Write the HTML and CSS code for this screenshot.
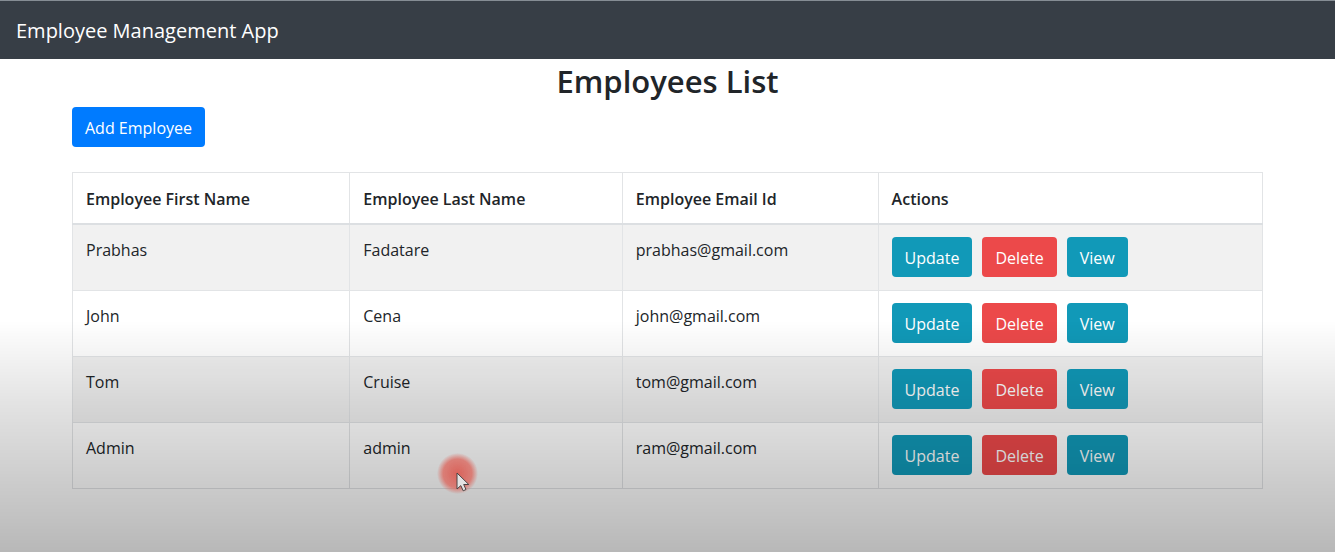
FILE: index.html
```
<!DOCTYPE html>
<html lang="en">
<head>
<meta charset="utf-8">
<title>Employee Management App</title>
<link rel="stylesheet" href="styles.css">
</head>
<body>
<header class="navbar"><a class="brand" href="#">Employee Management App</a></header>
<main class="container">
  <h2 class="title">Employees List</h2>
  <button class="btn btn-primary" type="button">Add Employee</button>
  <table class="table">
    <colgroup><col class="col-first"><col class="col-last"><col class="col-email"><col></colgroup>
    <thead>
      <tr><th scope="col">Employee First Name</th><th scope="col">Employee Last Name</th><th scope="col">Employee Email Id</th><th scope="col">Actions</th></tr>
    </thead>
    <tbody>
      <tr><td>Prabhas</td><td>Fadatare</td><td>prabhas@gmail.com</td><td><div class="actions"><button class="btn btn-info" type="button">Update</button><button class="btn btn-danger" type="button">Delete</button><button class="btn btn-info" type="button">View</button></div></td></tr>
      <tr><td>John</td><td>Cena</td><td>john@gmail.com</td><td><div class="actions"><button class="btn btn-info" type="button">Update</button><button class="btn btn-danger" type="button">Delete</button><button class="btn btn-info" type="button">View</button></div></td></tr>
      <tr><td>Tom</td><td>Cruise</td><td>tom@gmail.com</td><td><div class="actions"><button class="btn btn-info" type="button">Update</button><button class="btn btn-danger" type="button">Delete</button><button class="btn btn-info" type="button">View</button></div></td></tr>
      <tr><td>Admin</td><td>admin</td><td>ram@gmail.com</td><td><div class="actions"><button class="btn btn-info" type="button">Update</button><button class="btn btn-danger" type="button">Delete</button><button class="btn btn-info" type="button">View</button></div></td></tr>
    </tbody>
  </table>
</main>
<div class="shade"></div>
<div class="pointer">
  <svg class="cursor" viewBox="0 0 14 20" aria-hidden="true"><path d="M1 1v16l3.8-3.4 2.4 5.2 2.8-1.3-2.3-5h5.1z" fill="#e4e4e4" stroke="#4a4444" stroke-width="1"/></svg>
</div>
</body>
</html>
```

FILE: styles.css
```
* {
  box-sizing: border-box;
}

body {
  margin: 0;
  min-height: 100vh;
  background: #fff;
  color: #212529;
  font-family: "Segoe UI", "Open Sans", "Noto Sans", sans-serif;
  font-size: 16px;
  line-height: 26px;
}

.navbar {
  display: flex;
  align-items: center;
  padding: 15px 16px 13px;
  border-top: 1px solid #858d94;
  background: #373e46;
}

.brand {
  color: #fff;
  font-size: 20px;
  line-height: 30px;
  text-decoration: none;
}

.container {
  max-width: 1191px;
  margin: 0 auto;
}

.title {
  margin: 0 0 4px;
  font-size: 31px;
  font-weight: 600;
  line-height: 44px;
  text-align: center;
}

.btn {
  display: block;
  padding: 8px 13px 6px;
  border: 0;
  border-radius: 4px;
  color: #fff;
  font: inherit;
}

.btn-primary {
  background: #007bff;
}

.btn-info {
  background: #1199b8;
}

.btn-danger {
  background: #ec494a;
}

.table {
  width: 100%;
  margin-top: 25px;
  border-collapse: collapse;
  table-layout: fixed;
}

.col-first {
  width: 23.3%;
}

.col-last {
  width: 22.9%;
}

.col-email {
  width: 21.5%;
}

.table th,
.table td {
  padding: 12px 13px 13px;
  border: 1px solid #e2e4e6;
  text-align: left;
  vertical-align: top;
}

.table th {
  padding: 13px 13px 11px;
  border-bottom: 2px solid #dcdfe2;
  font-weight: 600;
}

.table tbody tr:nth-child(odd) {
  background: #f1f1f1;
}

.actions {
  display: flex;
  gap: 10px;
}

.shade {
  position: fixed;
  inset: 0;
  background: linear-gradient(transparent 58%, rgba(0, 0, 0, 0.11) 73%, rgba(0, 0, 0, 0.28));
  pointer-events: none;
}

.pointer {
  position: absolute;
  top: 453px;
  left: 437px;
  width: 41px;
  height: 41px;
  border-radius: 50%;
  background: radial-gradient(closest-side, rgba(218, 87, 78, 0.9), rgba(220, 105, 96, 0.8) 70%, rgba(220, 120, 110, 0));
  pointer-events: none;
}

.cursor {
  position: absolute;
  top: 19px;
  left: 19px;
  width: 14px;
  height: 20px;
}
```
